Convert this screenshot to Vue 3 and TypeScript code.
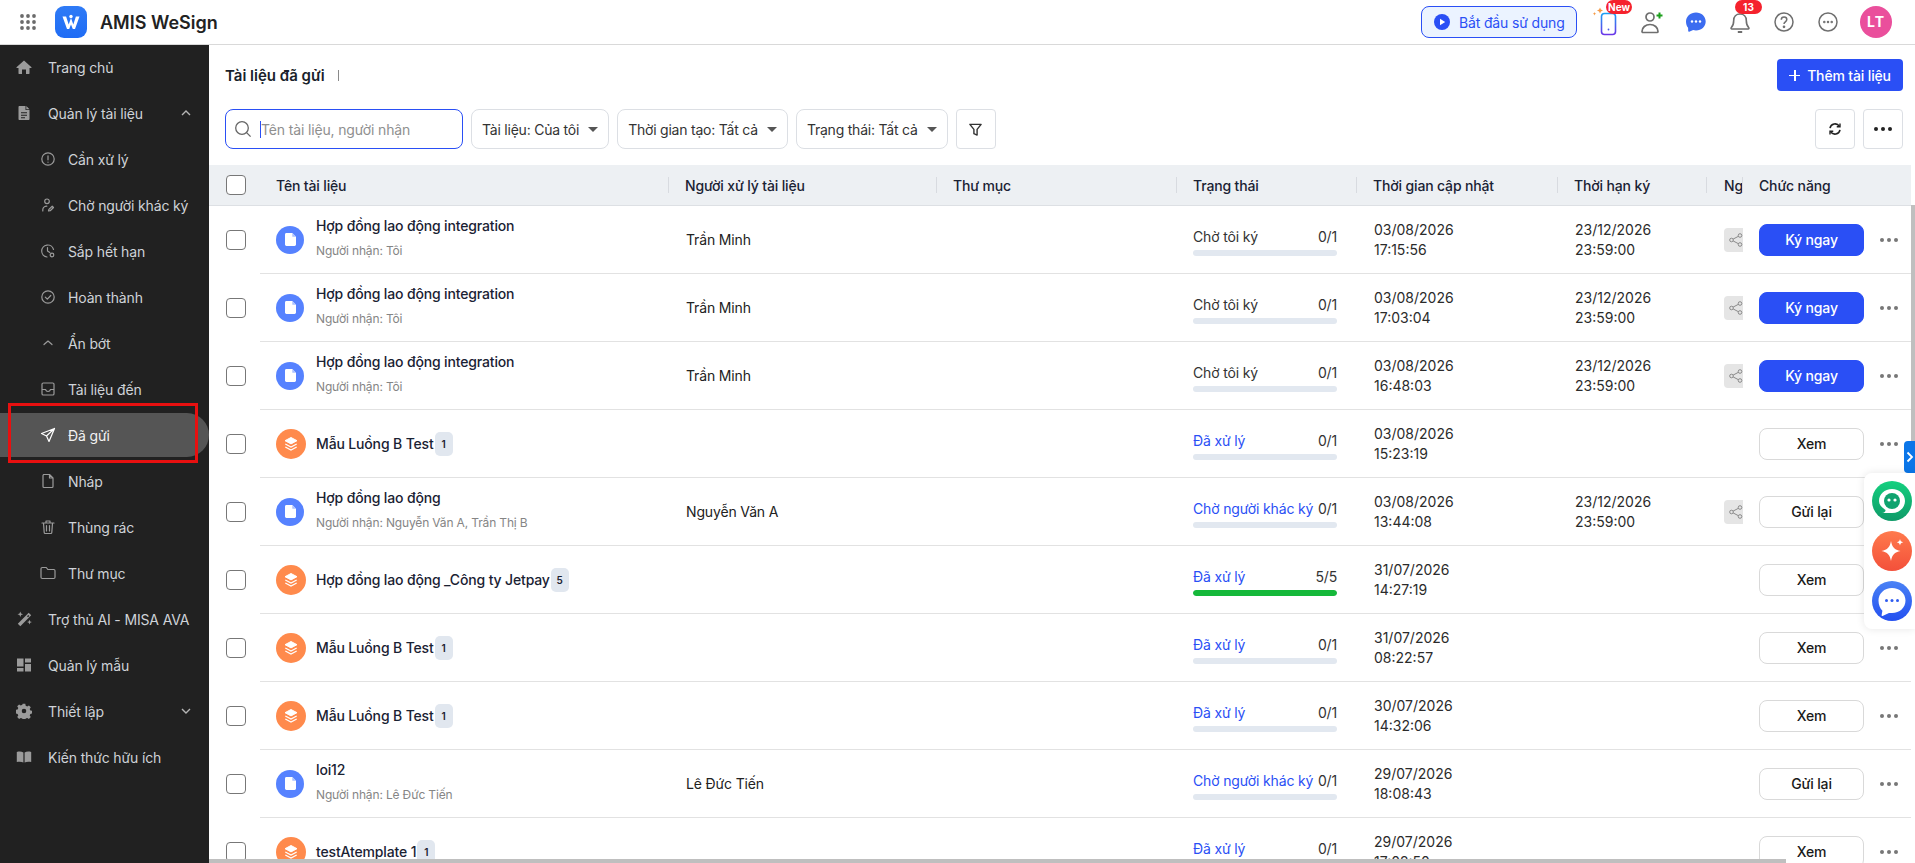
<template>
  <div class="app">
    <header class="topbar">
      <svg class="apps" viewBox="0 0 18 18"><circle v-for="d in appDots" :key="d.k" :cx="d.x" :cy="d.y" r="1.9" /></svg>
      <div class="logo">
        <svg viewBox="0 0 32 32" width="32" height="32">
          <defs><linearGradient id="lg" x1="0" y1="0" x2="0" y2="1"><stop offset="0" stop-color="#2f7bf6" /><stop offset="1" stop-color="#1f6cf5" /></linearGradient></defs>
          <rect width="32" height="32" rx="9" fill="url(#lg)" />
          <path d="M7.5 10.5h3.6l2.6 8 2.3-6.5 2.3 6.5 2.6-8h3.6L20 23h-2.2L16 18.5 14.200 23H12z" fill="#fff" />
          <circle cx="16" cy="10.500" r="1.700" fill="#fff" />
        </svg>
      </div>
      <div class="brand">AMIS WeSign</div>
      <div class="top-right">
        <button class="start-btn">
          <svg viewBox="0 0 16 16" width="16" height="16"><circle cx="8" cy="8" r="8" fill="#2a4ff5" /><path d="M6 4.700v6.600L11.200 8z" fill="#fff" /></svg>
          Bắt đầu sử dụng
        </button>
        <div class="top-item">
          <svg viewBox="0 0 44 32" width="44" height="32">
            <defs><linearGradient id="ph" x1="0" y1="0" x2="0" y2="1"><stop offset="0" stop-color="#1aa0f5" /><stop offset="1" stop-color="#6a35e8" /></linearGradient></defs>
            <rect x="15.500" y="7.500" width="14" height="21" rx="3" fill="none" stroke="url(#ph)" stroke-width="1.600" />
            <circle cx="22.500" cy="23.500" r=".9" fill="#4a5ae8" />
            <path d="M14 1.500l.9 2.100 2.100.9-2.100.9-.9 2.100-.9-2.100-2.100-.9 2.100-.9zM8.500 6l.5 1.200 1.200.5-1.200.5-.5 1.200-.5-1.200-1.200-.5 1.200-.5z" fill="#f59a45" />
          </svg>
          <span class="badge new">New</span>
        </div>
        <div class="top-item">
          <svg viewBox="0 0 24 24" width="24" height="24" fill="none" stroke="#6f6f6f" stroke-width="1.700">
            <circle cx="10" cy="7" r="4" />
            <path d="M2 21.500c0-4 3.500-7 8-7s8 3 8 7c0 .6-.4 1-1 1H3c-.6 0-1-.4-1-1z" />
            <path d="M19.500 2.500v6M16.500 5.500h6" stroke="#1c9f1c" stroke-width="2" />
          </svg>
        </div>
        <div class="top-item">
          <svg viewBox="0 0 22 22" width="22" height="22">
            <path d="M11 1.500c5.500 0 9.700 3.900 9.700 9s-4.200 9-9.700 9c-1 0-2-.1-2.900-.4L4.300 20.700c-.6.200-1.100-.2-1.100-.8l-.1-3.100C1.700 15.200 1 13 1 10.500c0-5.100 4.500-9 10-9z" fill="#3c6cf0" />
            <circle cx="7" cy="10.500" r="1.200" fill="#fff" /><circle cx="11" cy="10.500" r="1.200" fill="#fff" /><circle cx="15" cy="10.500" r="1.200" fill="#fff" />
          </svg>
        </div>
        <div class="top-item">
          <svg viewBox="0 0 22 24" width="22" height="24" fill="none" stroke="#6f6f6f" stroke-width="1.600">
            <path d="M11 4c-3.800 0-6.300 2.800-6.300 6.400 0 4.600-1.200 6-2.500 7.300-.4.500-.1 1.300.6 1.300h16.400c.7 0 1-.8.6-1.300-1.300-1.300-2.500-2.700-2.500-7.300C17.300 6.800 14.800 4 11 4z" />
            <path d="M8.800 22h4.400" stroke-width="2" />
          </svg>
          <span class="badge count">13</span>
        </div>
        <div class="top-item">
          <svg viewBox="0 0 20 20" width="20" height="20" fill="none" stroke="#6f6f6f" stroke-width="1.500">
            <circle cx="10" cy="10" r="9" />
            <path d="M7.300 7.800c0-1.600 1.200-2.700 2.800-2.700s2.700 1 2.700 2.400c0 2.300-2.800 2.300-2.800 4.500" />
            <circle cx="10" cy="14.800" r=".6" />
          </svg>
        </div>
        <div class="top-item">
          <svg viewBox="0 0 20 20" width="20" height="20" fill="none" stroke="#6f6f6f" stroke-width="1.500">
            <circle cx="10" cy="10" r="9" />
            <circle cx="6.300" cy="10" r=".5" /><circle cx="10" cy="10" r=".5" /><circle cx="13.700" cy="10" r=".5" />
          </svg>
        </div>
        <div class="avatar">LT</div>
      </div>
    </header>

    <div class="body">
      <aside class="sidebar">
        <div v-for="m in menu" :key="m.label" :class="['menu-item', { sub: m.sub, active: m.active }]">
          <svg class="menu-icon" viewBox="0 0 16 16">
            <path v-if="m.fill" :d="icons[m.icon]" fill="currentColor" fill-rule="evenodd" />
            <path v-else :d="icons[m.icon]" fill="none" stroke="currentColor" stroke-width="1.200" stroke-linecap="round" stroke-linejoin="round" />
          </svg>
          <span class="menu-label">{{ m.label }}</span>
          <svg v-if="m.chevron" class="chev" viewBox="0 0 12 8" width="12" height="8">
            <path :d="m.chevron === 'up' ? 'M2 6l4-4 4 4' : 'M2 2l4 4 4-4'" fill="none" stroke="#b5b5b5" stroke-width="1.400" />
          </svg>
        </div>
        <div class="red-box"></div>
      </aside>

      <main class="content">
        <div class="title-row">
          <div class="page-title">Tài liệu đã gửi</div>
          <span class="title-sep"></span>
          <button class="add-btn"><span class="plus"></span>Thêm tài liệu</button>
        </div>

        <div class="toolbar">
          <div class="search">
            <svg viewBox="0 0 18 18" width="18" height="18" fill="none" stroke="#666" stroke-width="1.300"><circle cx="8" cy="8" r="6.300" /><path d="M12.600 12.600l4 4" /></svg>
            <span class="text-caret"></span>
            <input placeholder="Tên tài liệu, người nhận" />
          </div>
          <div v-for="f in filters" :key="f" class="filter">{{ f }}<span class="tri"></span></div>
          <div class="icon-btn">
            <svg viewBox="0 0 16 16" width="15" height="15" fill="none" stroke="#333" stroke-width="1.500" stroke-linejoin="round"><path d="M2 2.500h12l-4.300 5.400v6l-3.400-1.500V7.900z" /></svg>
          </div>
          <div class="toolbar-right">
            <div class="icon-btn">
              <svg viewBox="0 0 16 16" width="14" height="14" fill="none" stroke="#222" stroke-width="1.800"><path d="M2.300 7A5.800 5.800 0 0 1 13 5M13.700 9A5.800 5.800 0 0 1 3 11" /><path d="M13.700 1.800V5.500H10M2.300 14.200V10.500H6" stroke-width="1.600" /></svg>
            </div>
            <div class="icon-btn">
              <svg viewBox="0 0 18 4" width="18" height="4" fill="#222"><circle cx="2" cy="2" r="2" /><circle cx="9" cy="2" r="2" /><circle cx="16" cy="2" r="2" /></svg>
            </div>
          </div>
        </div>

        <div class="table">
          <div class="thead">
            <div class="th-check"><span class="check"></span></div>
            <div v-for="h in heads" :key="h" class="th">{{ h }}</div>
          </div>
          <div v-for="(r, i) in rows" :key="i" class="tr">
            <div class="td-check"><span class="check"></span></div>
            <div class="td name-cell">
              <span :class="['type-icon', r.flow ? 'flow' : 'doc']">
                <svg v-if="r.flow" viewBox="0 0 16 16" width="16" height="16" fill="none" stroke="#fff">
                  <path d="M8 1.500l6 3.200-6 3.200-6-3.200z" fill="#fff" stroke-linejoin="round" />
                  <path d="M2.300 8L8 11l5.700-3M2.300 11L8 14l5.700-3" stroke-width="1.200" />
                </svg>
                <svg v-else viewBox="0 0 12 14" width="11" height="13"><path d="M1.500 0H8l4 4v8.500c0 .8-.7 1.500-1.500 1.500h-9C.7 14 0 13.300 0 12.500v-11C0 .7.700 0 1.500 0z" fill="#fff" /><path d="M8 0v4h4z" fill="#a9c0ff" /></svg>
              </span>
              <div class="name-text">
                <div class="name-line">
                  <span class="doc-name">{{ r.name }}</span>
                  <span v-if="r.count" class="count-tag">{{ r.count }}</span>
                </div>
                <div v-if="r.recipient" class="recipient">Người nhận: {{ r.recipient }}</div>
              </div>
            </div>
            <div class="td person">{{ r.person }}</div>
            <div class="td"></div>
            <div class="td status">
              <div class="status-top">
                <span :class="{ link: r.status !== 'Chờ tôi ký' }">{{ r.status }}</span>
                <span>{{ r.done }}/{{ r.total }}</span>
              </div>
              <div class="bar"><div class="bar-fill" :style="{ width: (r.done / r.total) * 100 + '%' }"></div></div>
            </div>
            <div class="td date"><span>{{ r.updated[0] }}</span><span>{{ r.updated[1] }}</span></div>
            <div class="td date"><template v-if="r.due"><span>23/12/2026</span><span>23:59:00</span></template></div>
            <div class="td share-cell">
              <span v-if="r.due" class="share">
                <svg viewBox="0 0 14 14" width="14" height="14" fill="none" stroke="#8a8a8a" stroke-width="1"><circle cx="2.500" cy="7" r="1.800" /><circle cx="11" cy="2.500" r="1.800" /><circle cx="11" cy="11.500" r="1.800" /><path d="M4.100 6.100l5.300-2.800M4.100 7.900l5.300 2.800" /></svg>
              </span>
            </div>
            <div class="td actions">
              <button :class="['act-btn', { primary: r.action === 'Ký ngay' }]">{{ r.action }}</button>
              <svg class="more" viewBox="0 0 18 4" width="18" height="4" fill="#777"><circle cx="2" cy="2" r="2" /><circle cx="9" cy="2" r="2" /><circle cx="16" cy="2" r="2" /></svg>
            </div>
          </div>
        </div>

        <div class="hscroll"></div>
        <div class="vscroll"></div>
      </main>
    </div>

    <div class="side-tab">
      <svg viewBox="0 0 8 12" width="8" height="12" fill="none" stroke="#fff" stroke-width="1.800"><path d="M1.500 1.500L6 6l-4.500 4.500" /></svg>
    </div>
    <div class="float-panel">
      <div class="fab green">
        <svg viewBox="0 0 40 40" width="40" height="40">
          <path d="M20 8c7.500 0 13 5.300 13 12 0 6.500-5.500 12-13 12H10c3 0 4-2 3.300-3.200C9.400 26.200 7 23.400 7 20c0-6.700 5.500-12 13-12z" fill="#fff" />
          <circle cx="20" cy="20" r="8" fill="#0fa36f" />
          <circle cx="17" cy="19" r="1.600" fill="#fff" /><circle cx="23" cy="19" r="1.600" fill="#fff" />
        </svg>
      </div>
      <div class="fab orange">
        <svg viewBox="0 0 40 40" width="40" height="40" fill="#fff">
          <path d="M19 10c1 6 3.500 8.800 9.500 10-6 1.200-8.500 4-9.500 10-1-6-3.500-8.800-9.500-10 6-1.200 8.500-4 9.500-10z" />
          <path d="M28 8c.4 2 1.200 2.800 3.200 3.200-2 .4-2.800 1.200-3.200 3.200-.4-2-1.200-2.800-3.200-3.200 2-.4 2.800-1.200 3.200-3.200z" />
        </svg>
      </div>
      <div class="fab blue">
        <svg viewBox="0 0 40 40" width="40" height="40">
          <path d="M20 7c7.700 0 13.500 5.500 13.500 12.500S27.700 32 20 32h-3l-6.500 3c-.6.200-1-.2-.9-.8l.8-4.500C8 27.200 6.500 23.600 6.500 19.500 6.500 12.500 12.300 7 20 7z" fill="#fff" />
          <circle cx="14.500" cy="19.500" r="1.500" fill="#2f5cf0" /><circle cx="20" cy="19.500" r="1.500" fill="#2f5cf0" /><circle cx="25.500" cy="19.500" r="1.500" fill="#2f5cf0" />
        </svg>
      </div>
    </div>
  </div>
</template>

<script setup lang="ts">
interface MenuItem {
  label: string
  icon: string
  sub?: boolean
  fill?: boolean
  active?: boolean
  chevron?: 'up' | 'down'
}

interface Row {
  name: string
  flow?: boolean
  count?: number
  recipient?: string
  person?: string
  status: string
  done: number
  total: number
  updated: [string, string]
  due?: boolean
  action: string
}

const appDots = [3, 9, 15].flatMap((y) => [3, 9, 15].map((x) => ({ k: `${x}-${y}`, x, y })))

const icons: Record<string, string> = {
  home: 'M8 1.500L.5 8.300c-.2.300 0 .7.300.7H2.500v5.500c0 .3.200.5.500.5h3v-4.500h4V15h3c.3 0 .5-.2.500-.5V9h1.700c.3 0 .5-.4.300-.7z',
  file: 'M3.500 1H9.500V5H13.500V14c0 .6-.5 1-1 1h-9c-.6 0-1-.4-1-1V2c0-.6.500-1 1-1zM10.300 1l3.200 3.300h-3.200zM5 7.300v1h6v-1zM5 9.800v1h6v-1zM5 12.200v1h4v-1z',
  alert: 'M8 1.800a6.200 6.200 0 1 0 0 12.400A6.200 6.200 0 0 0 8 1.800zM8 4.800v4M8 11v.2',
  userSign: 'M7 2a2.300 2.300 0 1 0 0 4.600A2.300 2.300 0 0 0 7 2zM2.800 14v-1.300c0-2 1.800-3.500 4-3.500M8.500 14l.4-1.600 3.300-3.200 1.300 1.300-3.300 3.200z',
  clock: 'M13.500 6.500A6 6 0 1 0 7 14M7.500 4.500V8l2.300 1.500M12 10.200a1.800 1.800 0 1 0 0 3.600 1.800 1.800 0 0 0 0-3.600z',
  check: 'M8 1.800a6.200 6.200 0 1 0 0 12.400A6.200 6.200 0 0 0 8 1.800zM5.300 8.200l2 2 3.500-3.700',
  up: 'M4 9.500l4-3.500 4 3.500',
  inbox: 'M3.300 2h9.400c.7 0 1.300.6 1.300 1.300v9.400c0 .7-.6 1.300-1.300 1.300H3.300c-.7 0-1.300-.6-1.300-1.300V3.300C2 2.600 2.600 2 3.300 2zM2 8.500h3.500c.4 1.300 1.300 2 2.500 2s2.100-.7 2.500-2H14',
  send: 'M14.500 1.500L1.500 6.500l5 2.500 2.500 5.500zM14.500 1.500L6.500 9',
  draft: 'M3.500 1.500H9.500L13 5v8.500c0 .6-.4 1-1 1H4c-.6 0-1-.4-1-1v-11c0-.6.400-1 1-1zM9.500 1.500V5H13',
  trash: 'M2 4h12M6 4V2h4v2M3.500 4l.7 9.500c0 .6.500 1 1 1h5.600c.6 0 1-.4 1-1L12.500 4M6.500 6.500v5.500M9.500 6.500v5.500',
  folder: 'M2.300 2.500h4l1.500 2h6c.7 0 1.200.5 1.200 1.200v6.600c0 .7-.5 1.200-1.200 1.200H2.300c-.7 0-1.300-.5-1.300-1.200V3.700c0-.7.600-1.200 1.300-1.200z',
  wand: 'M12.700 1.800l2.500 2.500L4.300 15.200 1.800 12.700zM11 5.200l1 1 1.300-1.300-1-1zM4.300 .5l.8 2 2 .8-2 .8-.8 2-.8-2-2-.8 2-.8zM13.500 8.700l.7 1.700 1.700.7-1.700.7-.7 1.700-.7-1.700-1.700-.7 1.700-.7z',
  template: 'M1 1.500h6.500v8H1zM9 1.500h6v4H9zM9 7h6v7.500H9zM1 11h6.500v3.500H1z',
  gear: 'M6.700 .8h2.600l.4 2 1.500.7 1.700-1.100 1.900 1.900-1.100 1.700.7 1.500 2 .4v2.600l-2 .4-.7 1.500 1.100 1.700-1.900 1.900-1.700-1.100-1.500.7-.4 2H6.700l-.4-2-1.500-.7-1.700 1.100-1.900-1.900 1.100-1.700-.7-1.500-2-.4V6.900l2-.4.7-1.500-1.100-1.700 1.900-1.900 1.700 1.100 1.500-.7zM8 5.700a2.300 2.300 0 1 0 0 4.600 2.300 2.300 0 0 0 0-4.600z',
  book: 'M.8 3c2.300-.6 4.700-.6 6.600.4v10.100c-1.900-.9-4.300-1-6.600-.4zM15.200 3c-2.300-.6-4.700-.6-6.600.4v10.100c1.900-.9 4.300-1 6.600-.4z',
}

const menu: MenuItem[] = [
  { label: 'Trang chủ', icon: 'home', fill: true },
  { label: 'Quản lý tài liệu', icon: 'file', fill: true, chevron: 'up' },
  { label: 'Cần xử lý', icon: 'alert', sub: true },
  { label: 'Chờ người khác ký', icon: 'userSign', sub: true },
  { label: 'Sắp hết hạn', icon: 'clock', sub: true },
  { label: 'Hoàn thành', icon: 'check', sub: true },
  { label: 'Ẩn bớt', icon: 'up', sub: true },
  { label: 'Tài liệu đến', icon: 'inbox', sub: true },
  { label: 'Đã gửi', icon: 'send', sub: true, active: true },
  { label: 'Nháp', icon: 'draft', sub: true },
  { label: 'Thùng rác', icon: 'trash', sub: true },
  { label: 'Thư mục', icon: 'folder', sub: true },
  { label: 'Trợ thủ AI - MISA AVA', icon: 'wand', fill: true },
  { label: 'Quản lý mẫu', icon: 'template', fill: true },
  { label: 'Thiết lập', icon: 'gear', fill: true, chevron: 'down' },
  { label: 'Kiến thức hữu ích', icon: 'book', fill: true },
]

const filters = ['Tài liệu: Của tôi', 'Thời gian tạo: Tất cả', 'Trạng thái: Tất cả']
const heads = ['Tên tài liệu', 'Người xử lý tài liệu', 'Thư mục', 'Trạng thái', 'Thời gian cập nhật', 'Thời hạn ký', 'Ng', 'Chức năng']

const integration = { name: 'Hợp đồng lao động integration', recipient: 'Tôi', person: 'Trần Minh', status: 'Chờ tôi ký', done: 0, total: 1, due: true, action: 'Ký ngay' }
const flowB = { name: 'Mẫu Luồng B Test', flow: true, count: 1, status: 'Đã xử lý', done: 0, total: 1, action: 'Xem' }

const rows: Row[] = [
  { ...integration, updated: ['03/08/2026', '17:15:56'] },
  { ...integration, updated: ['03/08/2026', '17:03:04'] },
  { ...integration, updated: ['03/08/2026', '16:48:03'] },
  { ...flowB, updated: ['03/08/2026', '15:23:19'] },
  { name: 'Hợp đồng lao động', recipient: 'Nguyễn Văn A, Trần Thị B', person: 'Nguyễn Văn A', status: 'Chờ người khác ký', done: 0, total: 1, updated: ['03/08/2026', '13:44:08'], due: true, action: 'Gửi lại' },
  { name: 'Hợp đồng lao động _Công ty Jetpay', flow: true, count: 5, status: 'Đã xử lý', done: 5, total: 5, updated: ['31/07/2026', '14:27:19'], action: 'Xem' },
  { ...flowB, updated: ['31/07/2026', '08:22:57'] },
  { ...flowB, updated: ['30/07/2026', '14:32:06'] },
  { name: 'loi12', recipient: 'Lê Đức Tiến', person: 'Lê Đức Tiến', status: 'Chờ người khác ký', done: 0, total: 1, updated: ['29/07/2026', '18:08:43'], action: 'Gửi lại' },
  { ...flowB, name: 'testAtemplate 1', updated: ['29/07/2026', '17:02:50'] },
]
</script>

<style>
html, body { margin: 0; height: 100%; overflow: hidden; background: #fff; }
</style>

<style scoped>
.app {
  position: relative; height: 863px; display: flex; flex-direction: column; overflow: hidden;
  font-family: Inter, "Noto Sans", sans-serif; font-size: 14px; letter-spacing: -.15px; color: #1c2230;
}
button { font-family: inherit; letter-spacing: inherit; cursor: pointer; }

.topbar {
  height: 44px; flex: none; display: flex; align-items: center; background: #fff;
  border-bottom: 1px solid #d9d9d9;
}
.apps { width: 18px; height: 18px; margin-left: 19px; fill: #6b6b6b; }
.logo { width: 32px; height: 32px; margin-left: 18px; }
.brand { margin-left: 13px; font-size: 18px; font-weight: 600; letter-spacing: 0; color: #222; }
.top-right { margin-left: auto; display: flex; align-items: center; padding-right: 23px; }
.start-btn {
  width: 156px; height: 32px; box-sizing: border-box; display: flex; align-items: center; gap: 9px;
  padding: 0 0 0 12px; background: #ebf3ff; border: 1px solid #2a4ff5; border-radius: 8px;
  color: #2a4ff5; font-size: 14px; margin-right: 9px;
}
.top-item { position: relative; width: 44px; height: 44px; display: flex; align-items: center; justify-content: center; }
.badge {
  position: absolute; top: 0; height: 14px; border-radius: 7px; background: #f5222d; color: #fff;
  font-size: 10px; font-weight: 700; letter-spacing: 0; line-height: 14px; text-align: center;
}
.badge.new { left: 20px; width: 26px; }
.badge.count { left: 17px; width: 27px; }
.avatar {
  width: 32px; height: 32px; margin-left: 10px; border-radius: 50%; background: #ea4f9c; color: #fff;
  font-size: 14px; font-weight: 700; letter-spacing: 1px; line-height: 32px; text-align: center;
}

.body { flex: 1; display: flex; min-height: 0; }
.sidebar { position: relative; width: 209px; flex: none; background: #212121; overflow: hidden; }
.menu-item {
  height: 46px; display: flex; align-items: center; color: #cfd3d8;
  padding-left: 16px; box-sizing: border-box;
}
.menu-item:first-child { margin-top: -1px; }
.menu-icon { width: 16px; height: 16px; color: #9b9b9b; flex: none; }
.menu-label { margin-left: 16px; white-space: nowrap; }
.menu-item.sub { padding-left: 40px; }
.menu-item.sub .menu-label { margin-left: 12px; }
.chev { margin-left: auto; margin-right: 17px; }
.menu-item.active { position: relative; color: #f2f2f2; }
.menu-item.active .menu-icon { color: #fff; }
.menu-item.active::before {
  content: ""; position: absolute; left: 0; right: 0; top: 1px; bottom: 1px;
  background: #555; border-radius: 0 22px 22px 0;
}
.menu-item.active > * { position: relative; }
.red-box {
  position: absolute; left: 8px; top: 358px; width: 190px; height: 60px; box-sizing: border-box;
  border: 3px solid #e81010; pointer-events: none;
}

.content { position: relative; flex: 1; min-width: 0; overflow: hidden; }
.title-row { display: flex; align-items: center; height: 32px; margin: 14px 12px 18px 16px; }
.page-title { font-size: 15px; font-weight: 600; letter-spacing: 0; color: #1a1f2b; }
.title-sep { width: 1px; height: 11px; margin-left: 13px; background: #8a8a8a; }
.add-btn {
  margin-left: auto; width: 126px; height: 32px; display: flex; align-items: center; justify-content: center; gap: 7px;
  background: #2a4ff5; color: #fff; border: none; border-radius: 4px; font-size: 14px; font-weight: 500;
}
.plus { position: relative; width: 11px; height: 11px; }
.plus::before, .plus::after { content: ""; position: absolute; background: #fff; }
.plus::before { left: 0; right: 0; top: 5px; height: 1.5px; }
.plus::after { top: 0; bottom: 0; left: 5px; width: 1.5px; }

.toolbar { display: flex; align-items: stretch; gap: 8px; height: 40px; margin: 0 12px 16px 16px; }
.search {
  width: 238px; box-sizing: border-box; display: flex; align-items: center; padding-left: 8px;
  border: 1px solid #2a4ff5; border-radius: 8px;
}
.text-caret { width: 1px; height: 17px; background: #2a4ff5; margin-left: 8px; flex: none; }
.search input {
  flex: 1; min-width: 0; border: none; outline: none; padding: 0; font: inherit; letter-spacing: inherit; color: #333; background: none;
}
.search input::placeholder { color: #8f8f8f; opacity: 1; }
.filter {
  display: flex; align-items: center; box-sizing: border-box; padding: 0 10px; gap: 9px; letter-spacing: -.22px;
  border: 1px solid #dcdfe4; border-radius: 8px; color: #333; white-space: nowrap;
}
.tri { width: 0; height: 0; border-left: 5px solid transparent; border-right: 5px solid transparent; border-top: 5px solid #555; }
.icon-btn {
  width: 40px; box-sizing: border-box; display: flex; align-items: center; justify-content: center;
  border: 1px solid #dcdfe4; border-radius: 4px;
}
.toolbar-right { margin-left: auto; display: flex; gap: 8px; }

.table { width: 1702px; }
.thead, .tr { display: grid; grid-template-columns: 51px 409px 268px 240px 180px 201px 149px 36px 168px; }
.thead { height: 41px; box-sizing: border-box; background: #edf0f3; border-bottom: 1px solid #dde0e4; }
.th-check, .td-check { display: flex; align-items: center; padding-left: 17px; }
.th {
  position: relative; display: flex; align-items: center; padding-left: 16px; font-weight: 500; color: #1a2233;
  white-space: nowrap; overflow: hidden;
}
.th::after { content: ""; position: absolute; right: 0; top: 12px; height: 16px; width: 1px; background: #d8dbe0; }
.th:last-child::after { display: none; }
.th:nth-child(8) { padding-left: 17px; }
.check {
  display: block; width: 20px; height: 20px; box-sizing: border-box; border: 1px solid #777; border-radius: 4px; background: #fff;
}
.tr { height: 68px; }
.td {
  height: 68px; box-sizing: border-box; border-bottom: 1px solid #e2e2e2; display: flex; align-items: center;
  padding-left: 16px; min-width: 0;
}
.type-icon { flex: none; display: flex; align-items: center; justify-content: center; border-radius: 50%; }
.type-icon.doc { width: 28px; height: 28px; background: #5682ff; margin-right: 12px; }
.type-icon.flow { width: 30px; height: 30px; background: #ff8a4c; margin-right: 10px; }
.name-line { display: flex; align-items: center; gap: 1px; min-height: 20px; }
.doc-name { font-weight: 500; color: #1a2233; white-space: nowrap; }
.count-tag {
  width: 18px; height: 24px; border-radius: 5px; background: #e1e7ef; font-size: 10px; font-weight: 600;
  letter-spacing: 0; line-height: 24px; text-align: center;
}
.recipient { margin: 8px 0 6px; font-size: 12px; line-height: 15px; color: #858585; white-space: nowrap; }
.person { color: #222; padding-left: 17px; }
.status { display: block; padding: 23px 20px 0 16px; }
.status-top { display: flex; justify-content: space-between; line-height: 16px; color: #333; white-space: nowrap; }
.status-top .link { color: #2a4ff5; }
.bar { height: 6px; margin-top: 5px; border-radius: 3px; background: #e2e8f0; overflow: hidden; }
.bar-fill { height: 100%; background: #15b83a; border-radius: 3px; }
.date { flex-direction: column; align-items: flex-start; justify-content: center; padding-left: 17px; line-height: 20px; color: #2b2b2b; letter-spacing: 0; }
.share-cell { padding-left: 17px; overflow: hidden; }
.share { flex: none; width: 24px; height: 24px; border-radius: 4px; background: #e5e5e5; display: flex; align-items: center; padding-left: 5px; box-sizing: border-box; }
.actions { padding-left: 16px; }
.act-btn {
  width: 105px; height: 32px; box-sizing: border-box; border: 1px solid #d9d9d9; border-radius: 8px; background: #fff;
  color: #1a1a1a; font-size: 14px; font-weight: 500;
}
.act-btn.primary { background: #2a4ff5; border-color: #2a4ff5; color: #fff; }
.more { margin-left: 16px; flex: none; }

.hscroll { position: absolute; left: 0; bottom: 0; width: 1577px; height: 4px; background: #bfbfbf; }
.vscroll { position: absolute; right: 0; top: 160px; width: 4px; height: 240px; background: #bfbfbf; }

.side-tab {
  position: absolute; left: 1904px; top: 441px; width: 11px; height: 32px; background: #0b76e8; border-radius: 4px 0 0 4px;
  display: flex; align-items: center; justify-content: center;
}
.float-panel {
  position: absolute; left: 1864px; top: 473px; width: 51px; height: 156px; box-sizing: border-box; padding: 8px 3px 8px 8px;
  display: flex; flex-direction: column; gap: 10px; background: #fff; border-radius: 8px 0 0 8px;
  box-shadow: 0 0 8px rgba(0, 0, 0, .1);
}
.fab { width: 40px; height: 40px; border-radius: 50%; }
.fab.green { background: linear-gradient(#14d07f, #0f9a68); }
.fab.orange { background: linear-gradient(#ff7a4d, #f3503a); }
.fab.blue { background: linear-gradient(#4a82f5, #2450f0); }
</style>
